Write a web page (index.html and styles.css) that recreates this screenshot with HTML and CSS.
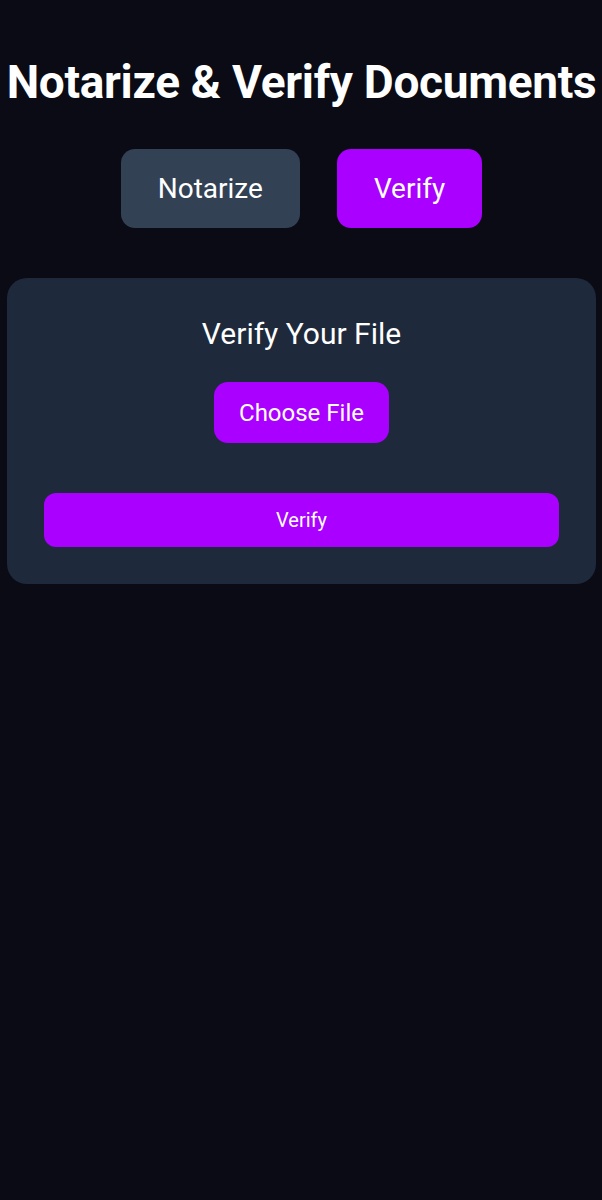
FILE: index.html
```html
<!DOCTYPE html>
<html>
<head>
<meta charset="utf-8">
<link rel="stylesheet" href="styles.css">
</head>
<body>
<main class="page">
  <h1 class="title">Notarize &amp; Verify Documents</h1>
  <div class="tabs">
    <button class="tab tab-inactive">Notarize</button>
    <button class="tab tab-active">Verify</button>
  </div>
  <section class="card">
    <h2 class="card-title">Verify Your File</h2>
    <button class="choose">Choose File</button>
    <button class="submit">Verify</button>
  </section>
</main>
</body>
</html>
```

FILE: styles.css
```css
* { box-sizing: border-box; }
html, body {
  margin: 0;
  background: #0a0b14;
  color: #ffffff;
  font-family: Roboto, "Noto Sans", sans-serif;
}
body { min-height: 1200px; }
.page {
  display: flex;
  flex-direction: column;
  align-items: center;
  padding: 50px 6px 0 7px;
}
.title {
  margin: 0;
  font-size: 46px;
  font-weight: 700;
  line-height: 64px;
  letter-spacing: -0.3px;
  white-space: nowrap;
}
.tabs {
  display: flex;
  gap: 37px;
  margin-top: 35px;
}
.tab {
  border: none;
  border-radius: 14px;
  color: #fff;
  font-family: Roboto, sans-serif;
  font-size: 28px;
  height: 79px;
  padding: 0 37px;
}
.tab-inactive { background: #334155; }
.tab-active { background: #aa00ff; }
.card {
  align-self: stretch;
  margin-top: 50px;
  background: #1e293b;
  border-radius: 20px;
  padding: 36px 37px 37px;
  display: flex;
  flex-direction: column;
  align-items: center;
}
.card-title {
  margin: 0;
  font-size: 30px;
  font-weight: 400;
  line-height: 40px;
}
.choose {
  margin-top: 28px;
  border: none;
  border-radius: 14px;
  background: #aa00ff;
  color: #fff;
  font-family: Roboto, sans-serif;
  font-size: 24px;
  height: 61px;
  padding: 0 25px;
}
.submit {
  margin-top: 50px;
  align-self: stretch;
  border: none;
  border-radius: 12px;
  background: #aa00ff;
  color: #fff;
  font-family: Roboto, sans-serif;
  font-size: 20px;
  height: 54px;
}
```
